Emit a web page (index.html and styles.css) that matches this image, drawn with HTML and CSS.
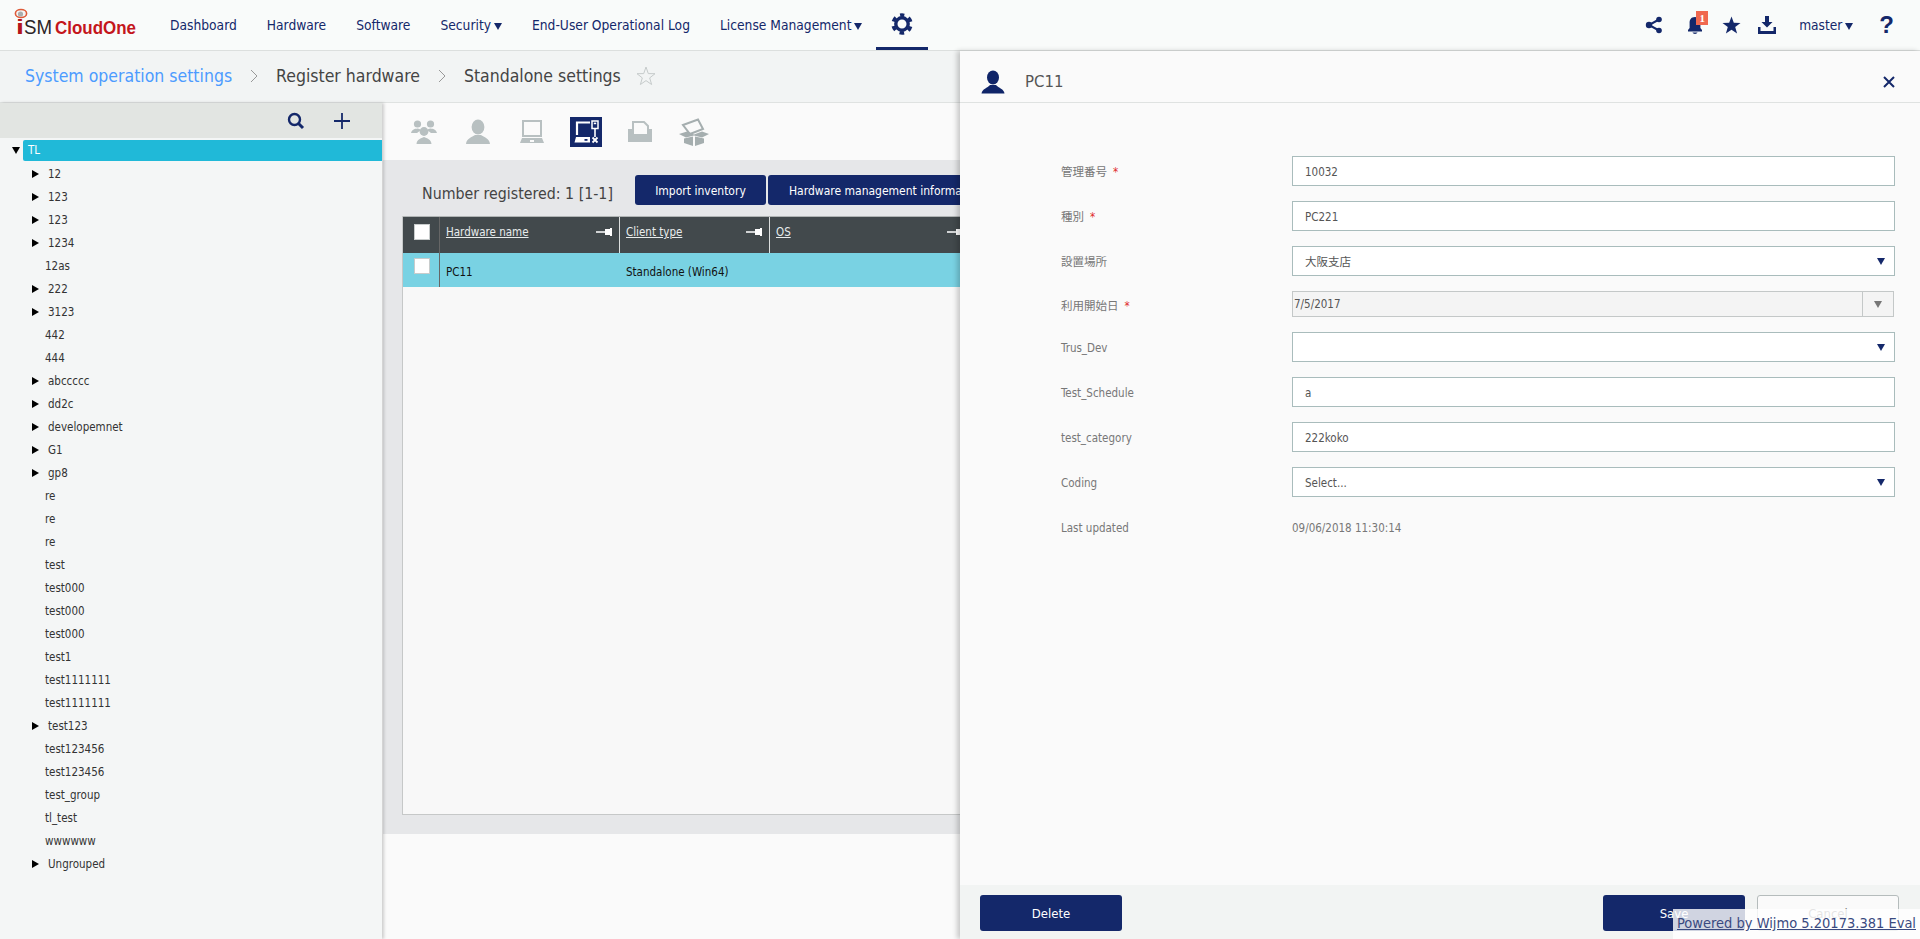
FILE: index.html
```html
<!DOCTYPE html>
<html lang="en">
<head>
    <meta charset="UTF-8">
    <title>ISM CloudOne</title>
    <link rel="stylesheet" href="styles.css">
</head>
<body>
    <!-- Top navigation -->
    <header class="topbar">
        <div class="logo">
            <svg width="140" height="40" viewBox="0 0 140 40">
                <ellipse cx="21" cy="13.5" rx="5.6" ry="4" fill="#f4f5f5" stroke="#de5a38" stroke-width="1.6"/>
                <circle cx="20.5" cy="14" r="2.6" fill="#a9adad"/>
                <text x="16" y="34" class="logo-i" textLength="8" lengthAdjust="spacingAndGlyphs">i</text>
                <text x="24" y="34" class="logo-sm" textLength="28" lengthAdjust="spacingAndGlyphs">SM</text>
                <text x="55" y="34" class="logo-cloud" textLength="81" lengthAdjust="spacingAndGlyphs">CloudOne</text>
            </svg>
        </div>
        <nav class="nav">
            <a>Dashboard</a>
            <a>Hardware</a>
            <a>Software</a>
            <a>Security<span class="nav-caret"></span></a>
            <a>End-User Operational Log</a>
            <a>License Management<span class="nav-caret"></span></a>
            <a class="nav-gear">
                <svg width="24" height="24" viewBox="0 0 24 24">
                    <circle cx="12" cy="12" r="6.2" fill="none" stroke="#14286a" stroke-width="3.4"/>
                    <circle cx="12" cy="12" r="9" fill="none" stroke="#14286a" stroke-width="3.4" stroke-dasharray="4.6 4.82" stroke-dashoffset="2.3" transform="rotate(-90 12 12)"/>
                </svg>
            </a>
        </nav>
        <div class="top-icons">
            <svg class="ti-share" width="18" height="18" viewBox="0 0 18 18">
                <path d="M14 3.5 L4 9 L14 14.5" fill="none" stroke="#14286a" stroke-width="2"/>
                <circle cx="14" cy="3.5" r="2.8" fill="#14286a"/>
                <circle cx="4" cy="9" r="3.2" fill="#14286a"/>
                <circle cx="14" cy="14.5" r="2.8" fill="#14286a"/>
            </svg>
            <div class="ti-bell">
                <svg width="16" height="19" viewBox="0 0 16 19">
                    <path d="M8 1 C3.8 1 2.6 4 2.6 7 L2.6 12 L1 14 L1 15.5 L15 15.5 L15 14 L13.4 12 L13.4 7 C13.4 4 12.2 1 8 1 Z M5.5 16.5 C6 18.4 10 18.4 10.5 16.5 Z" fill="#14286a"/>
                </svg>
                <span class="badge">1</span>
            </div>
            <svg class="ti-star" width="19" height="18" viewBox="0 0 19 18">
                <polygon points="9.5,0.5 11.8,6.7 18.5,6.9 13.2,11 15.1,17.5 9.5,13.7 3.9,17.5 5.8,11 0.5,6.9 7.2,6.7" fill="#14286a"/>
            </svg>
            <svg class="ti-down" width="18" height="18" viewBox="0 0 18 18">
                <path d="M7 0 L11 0 L11 6 L14.5 6 L9 11.5 L3.5 6 L7 6 Z M0 11 L2.5 11 L2.5 15 L15.5 15 L15.5 11 L18 11 L18 18 L0 18 Z" fill="#14286a"/>
            </svg>
            <span class="ti-user">master<span class="nav-caret"></span></span>
            <span class="ti-help">?</span>
        </div>
    </header>

    <!-- Breadcrumb -->
    <div class="crumbs">
        <a class="crumb-link">System operation settings</a>
        <svg class="chev" width="8" height="14" viewBox="0 0 8 14"><path d="M1 1 L7 7 L1 13" fill="none" stroke="#999" stroke-width="1"/></svg>
        <span>Register hardware</span>
        <svg class="chev" width="8" height="14" viewBox="0 0 8 14"><path d="M1 1 L7 7 L1 13" fill="none" stroke="#999" stroke-width="1"/></svg>
        <span>Standalone settings</span>
        <svg class="crumb-star" width="20" height="20" viewBox="0 0 20 20">
            <polygon points="10,1 12.3,7.6 19,7.7 13.7,11.9 15.6,18.5 10,14.6 4.4,18.5 6.3,11.9 1,7.7 7.7,7.6" fill="none" stroke="#c6cbcb" stroke-width="1"/>
        </svg>
    </div>

    <div class="content">
        <!-- Tree on the left -->
        <aside class="side">
            <div class="side-tools">
                <svg width="18" height="18" viewBox="0 0 18 18">
                    <circle cx="7.5" cy="7.5" r="5.5" fill="none" stroke="#14286a" stroke-width="2.4"/>
                    <path d="M11.5 11.5 L16 16" stroke="#14286a" stroke-width="3"/>
                </svg>
                <svg width="16" height="16" viewBox="0 0 16 16">
                    <path d="M8 0 V16 M0 8 H16" stroke="#14286a" stroke-width="1.8"/>
                </svg>
            </div>
            <div class="tree">
                <div class="tree-root"><span class="tri-down"></span><span class="tree-sel">TL</span></div>
                <div class="node"><span class="tri"></span>12</div>
                <div class="node"><span class="tri"></span>123</div>
                <div class="node"><span class="tri"></span>123</div>
                <div class="node"><span class="tri"></span>1234</div>
                <div class="node leaf">12as</div>
                <div class="node"><span class="tri"></span>222</div>
                <div class="node"><span class="tri"></span>3123</div>
                <div class="node leaf">442</div>
                <div class="node leaf">444</div>
                <div class="node"><span class="tri"></span>abccccc</div>
                <div class="node"><span class="tri"></span>dd2c</div>
                <div class="node"><span class="tri"></span>developemnet</div>
                <div class="node"><span class="tri"></span>G1</div>
                <div class="node"><span class="tri"></span>gp8</div>
                <div class="node leaf">re</div>
                <div class="node leaf">re</div>
                <div class="node leaf">re</div>
                <div class="node leaf">test</div>
                <div class="node leaf">test000</div>
                <div class="node leaf">test000</div>
                <div class="node leaf">test000</div>
                <div class="node leaf">test1</div>
                <div class="node leaf">test1111111</div>
                <div class="node leaf">test1111111</div>
                <div class="node"><span class="tri"></span>test123</div>
                <div class="node leaf">test123456</div>
                <div class="node leaf">test123456</div>
                <div class="node leaf">test_group</div>
                <div class="node leaf">tl_test</div>
                <div class="node leaf">wwwwww</div>
                <div class="node"><span class="tri"></span>Ungrouped</div>
            </div>
        </aside>

        <main class="main">
            <!-- Client type tabs -->
            <div class="tabs">
                <div class="tab">
                    <svg width="26" height="26" viewBox="0 0 26 26" fill="#b8c0c1">
                        <circle cx="6.5" cy="5" r="3.6"/><circle cx="19.5" cy="5" r="3.6"/>
                        <path d="M0 14 C1 10 4 10 6.5 9.5 C8 10 9 10 10 11 L6 14 Z M26 14 C25 10 22 10 19.5 9.5 C18 10 17 10 16 11 L20 14 Z"/>
                        <circle cx="13" cy="12.5" r="4.4"/>
                        <path d="M5.5 25 C6 20 10 19.5 13 18 C16 19.5 20 20 20.5 25 Z"/>
                    </svg>
                </div>
                <div class="tab">
                    <svg width="26" height="26" viewBox="0 0 26 26" fill="#b8c0c1">
                        <ellipse cx="13" cy="8" rx="6.4" ry="7.6"/>
                        <path d="M1 25 C1.5 19 7 18.5 10 16 L16 16 C19 18.5 24.5 19 25 25 Z"/>
                    </svg>
                </div>
                <div class="tab">
                    <svg width="26" height="24" viewBox="0 0 26 24">
                        <rect x="4" y="1" width="18" height="15" fill="none" stroke="#b8c0c1" stroke-width="2"/>
                        <path d="M3 18 H23 L25 23 H1 Z" fill="#b8c0c1"/>
                        <rect x="11" y="20" width="4" height="2" fill="#fafafa"/>
                    </svg>
                </div>
                <div class="tab">
                    <svg class="tab-active" width="32" height="30" viewBox="0 0 32 30">
                        <rect width="32" height="30" fill="#14286a"/>
                        <path d="M20 5.5 H7 V18" fill="none" stroke="#fff" stroke-width="2.2"/>
                        <rect x="22" y="4" width="6" height="7.5" fill="none" stroke="#fff" stroke-width="1.5"/>
                        <rect x="23.8" y="5.6" width="2.4" height="1.6" fill="#fff"/>
                        <path d="M25 11 V20" stroke="#fff" stroke-width="1.6"/>
                        <path d="M6 20 H20 V25.5 H4.5 Z" fill="#fff"/>
                        <rect x="14.5" y="22" width="3" height="1.8" fill="#14286a"/>
                        <path d="M22.5 20.5 L27.5 25.5 M27.5 20.5 L22.5 25.5" stroke="#fff" stroke-width="1.8"/>
                    </svg>
                </div>
                <div class="tab">
                    <svg width="26" height="22" viewBox="0 0 26 22">
                        <path d="M6 1 H17 L21 5 V14 H6 Z" fill="#fafafa" stroke="#b8c0c1" stroke-width="2"/>
                        <path d="M1 8 H5 V15 H22 V8 H25 V21 H1 Z" fill="#b8c0c1"/>
                    </svg>
                </div>
                <div class="tab">
                    <svg width="32" height="28" viewBox="0 0 32 28" fill="#a5aeaf">
                        <path d="M5 7 L20 1.5 L25 11 L12 16 Z" fill="none" stroke="#a5aeaf" stroke-width="2"/>
                        <path d="M1 16 L9 13.5 L16 16.5 L24 13.5 L31 16 L24 19.5 L16 17.5 L8 19.5 Z"/>
                        <path d="M6 20.5 L15 18.5 V28 L6 25 Z M26 20.5 L17 18.5 V28 L26 25 Z"/>
                    </svg>
                </div>
            </div>

            <section class="panel">
                <div class="panel-top">
                    <span class="count">Number registered: 1 [1-1]</span>
                    <button class="btn-top btn-import">Import inventory</button>
                    <button class="btn-top btn-info">Hardware management information</button>
                </div>
                <div class="grid">
                    <div class="grid-head">
                        <div class="cell cell-check"><span class="check"></span></div>
                        <div class="cell cell-name"><u>Hardware name</u>
                            <svg class="pin" width="16" height="8" viewBox="0 0 16 8"><path d="M0 3.2 H9 V1 H14 V0 H16 V8 H14 V7 H9 V4.8 H0 Z" fill="#fff"/></svg>
                        </div>
                        <div class="cell cell-client"><u>Client type</u>
                            <svg class="pin" width="16" height="8" viewBox="0 0 16 8"><path d="M0 3.2 H9 V1 H14 V0 H16 V8 H14 V7 H9 V4.8 H0 Z" fill="#fff"/></svg>
                        </div>
                        <div class="cell cell-os"><u>OS</u>
                            <svg class="pin pin-os" width="16" height="8" viewBox="0 0 16 8"><path d="M0 3.2 H9 V1 H14 V0 H16 V8 H14 V7 H9 V4.8 H0 Z" fill="#fff"/></svg>
                        </div>
                    </div>
                    <div class="grid-row">
                        <div class="cell cell-check"><span class="check"></span></div>
                        <div class="cell cell-name">PC11</div>
                        <div class="cell cell-client">Standalone (Win64)</div>
                        <div class="cell cell-os"></div>
                    </div>
                </div>
            </section>
        </main>
    </div>

    <!-- Drawer over the page -->
    <div class="drawer">
        <div class="drawer-head">
            <svg width="24" height="24" viewBox="0 0 24 24" fill="#0f2468">
                <ellipse cx="12" cy="7.5" rx="6" ry="7"/>
                <path d="M0.5 23.5 C1 19 6.5 18 9 15 L15 15 C17.5 18 23 19 23.5 23.5 Z"/>
            </svg>
            <span class="drawer-title">PC11</span>
            <svg class="drawer-close" width="12" height="12" viewBox="0 0 12 12">
                <path d="M1 1 L11 11 M11 1 L1 11" stroke="#14286a" stroke-width="2"/>
            </svg>
        </div>
        <div class="form">
            <div class="row">
                <label class="lbl">管理番号<i class="req">*</i></label>
                <div class="field">10032</div>
            </div>
            <div class="row">
                <label class="lbl">種別<i class="req">*</i></label>
                <div class="field">PC221</div>
            </div>
            <div class="row">
                <label class="lbl">設置場所</label>
                <div class="field field-select">大阪支店<span class="sel-arrow"></span></div>
            </div>
            <div class="row row-date">
                <label class="lbl">利用開始日<i class="req">*</i></label>
                <div class="field-date"><span class="date-text">7/5/2017</span><span class="date-btn"><span class="sel-arrow sel-arrow-grey"></span></span></div>
            </div>
            <div class="row">
                <label class="lbl">Trus_Dev</label>
                <div class="field field-select"><span class="sel-arrow"></span></div>
            </div>
            <div class="row">
                <label class="lbl">Test_Schedule</label>
                <div class="field">a</div>
            </div>
            <div class="row">
                <label class="lbl">test_category</label>
                <div class="field">222koko</div>
            </div>
            <div class="row">
                <label class="lbl">Coding</label>
                <div class="field field-select">Select...<span class="sel-arrow"></span></div>
            </div>
            <div class="row">
                <label class="lbl">Last updated</label>
                <div class="value">09/06/2018 11:30:14</div>
            </div>
        </div>
        <div class="drawer-foot">
            <button class="btn btn-navy">Delete</button>
            <button class="btn btn-navy btn-save">Save</button>
            <button class="btn btn-cancel">Cancel</button>
        </div>
    </div>

    <a class="wijmo">Powered by Wijmo 5.20173.381 Eval</a>
</body>
</html>
```

FILE: styles.css
```css
/* Page */
html, body {
    height: 100%;
}

body {
    margin: 0;
    height: 939px;
    overflow: hidden;
    position: relative;
    background-color: #fafafa;
    color: #333;
    font-family: "DejaVu Sans Condensed", "DejaVu Sans", "Noto Sans CJK JP", sans-serif;
    font-size: 11.5px;
}

/* Top bar */
.topbar {
    display: flex;
    align-items: center;
    height: 50px;
    background-color: #f9fbfa;
    border-bottom: 1px solid #dcdfde;
}

.logo {
    width: 170px;
    height: 50px;
    flex: none;
}

.logo svg {
    display: block;
}

.logo-i, .logo-sm, .logo-cloud {
    font-family: "Liberation Sans", sans-serif;
    font-size: 21px;
}

.logo-i {
    fill: #b3151c;
    font-weight: bold;
}

.logo-sm {
    fill: #2b2326;
}

.logo-cloud {
    fill: #c4161c;
    font-weight: bold;
    font-size: 18px;
}

.nav {
    display: flex;
    align-items: center;
    gap: 30px;
    height: 50px;
    font-size: 13.7px;
    color: #14286a;
}

.nav-caret {
    display: inline-block;
    width: 0;
    height: 0;
    margin-left: 3px;
    border-left: 4px solid transparent;
    border-right: 4px solid transparent;
    border-top: 7px solid #14286a;
    vertical-align: 0;
}

.nav-gear {
    display: flex;
    align-items: center;
    justify-content: center;
    width: 52px;
    height: 47px;
    margin-left: -16px;
    border-bottom: 3px solid #14286a;
}

.top-icons {
    display: flex;
    align-items: center;
    margin-left: auto;
    height: 50px;
    padding-right: 26px;
    color: #14286a;
}

.ti-share {
    margin-right: 24px;
}

.ti-bell {
    position: relative;
    display: flex;
    margin-right: 19px;
}

.badge {
    position: absolute;
    top: -5px;
    left: 9px;
    width: 12px;
    height: 14px;
    background-color: #f0684f;
    color: #fff;
    font: bold 11px/14px "Liberation Serif", serif;
    text-align: center;
}

.ti-star {
    margin-right: 17px;
}

.ti-down {
    margin-right: 23px;
}

.ti-user {
    font-size: 13.6px;
    margin-right: 26px;
}

.ti-help {
    font: bold 24px/24px "Liberation Sans", sans-serif;
}

/* Breadcrumb */
.crumbs {
    display: flex;
    align-items: center;
    height: 49px;
    padding: 0 0 2px 25px;
    background-color: #f2f4f4;
    border-bottom: 1px solid #dfe2e1;
    font-size: 17.5px;
    color: #444;
}

.crumb-link {
    color: #4c9bff;
}

.chev {
    margin: 0 18px 0 18px;
}

.crumb-star {
    margin-left: 15px;
}

/* Content below the breadcrumb */
.content {
    display: flex;
    height: 836px;
}

.side {
    width: 382px;
    flex: none;
    background-color: #f4f6f6;
    box-shadow: 2px 0 3px rgba(0, 0, 0, 0.18);
    position: relative;
}

.side-tools {
    display: flex;
    align-items: center;
    justify-content: flex-end;
    gap: 29px;
    height: 35px;
    padding-right: 32px;
    background-color: #e2e5e2;
}

.tree {
    padding-top: 2px;
}

.tree-root {
    display: flex;
    align-items: center;
    height: 21px;
    padding-left: 12px;
    margin-bottom: 1px;
}

.tri-down {
    width: 0;
    height: 0;
    margin-right: 3px;
    border-left: 4px solid transparent;
    border-right: 4px solid transparent;
    border-top: 7px solid #000;
}

.tree-sel {
    flex: 1;
    height: 21px;
    line-height: 20px;
    padding-left: 5px;
    background-color: #20b9d8;
    border-radius: 2px 0 0 2px;
    color: #fff;
}

.node {
    display: flex;
    align-items: center;
    height: 23px;
    padding-left: 32px;
}

.node.leaf {
    padding-left: 45px;
}

.tri {
    width: 0;
    height: 0;
    margin-right: 9px;
    border-top: 4px solid transparent;
    border-bottom: 4px solid transparent;
    border-left: 7px solid #000;
}

/* Main column */
.main {
    flex: 1;
    margin-left: 1px;
    min-width: 0;
    overflow: hidden;
}

.tabs {
    display: flex;
    align-items: center;
    height: 57px;
    padding-left: 14px;
    background-color: #fafafa;
}

.tab {
    display: flex;
    align-items: center;
    justify-content: center;
    width: 54px;
}

.panel {
    height: 674px;
    padding: 15px 20px 0 19px;
    box-sizing: border-box;
    background-color: #e6e7e9;
}

.panel-top {
    display: flex;
    height: 30px;
}

.count {
    width: 233px;
    padding-left: 20px;
    box-sizing: border-box;
    font-size: 15.8px;
    line-height: 38px;
    color: #444;
    white-space: nowrap;
}

.btn-top {
    height: 30px;
    padding: 1px 0 0;
    border: none;
    border-radius: 3px;
    background-color: #14286a;
    color: #fff;
    font: 12px "DejaVu Sans Condensed", "DejaVu Sans", sans-serif;
}

.btn-import {
    width: 131px;
    margin-right: 2px;
}

.btn-info {
    width: 240px;
    padding-left: 21px;
    text-align: left;
    white-space: nowrap;
    overflow: hidden;
}

.grid {
    height: 599px;
    margin-top: 11px;
    box-sizing: border-box;
    background-color: #f8f8f8;
    border: 1px solid #c6c8c8;
    border-top-width: 0;
}

.grid-head, .grid-row {
    display: flex;
}

.grid-head {
    height: 37px;
    background-color: #42494c;
    color: #e8ecec;
    border-top: 1px solid #b0b4b4;
    box-sizing: border-box;
}

.grid-head .cell {
    padding-bottom: 6px;
}

.grid-row {
    height: 34px;
    background-color: #79d2e3;
    color: #111;
}

.grid-row .cell {
    padding-top: 3px;
}

.cell {
    position: relative;
    box-sizing: border-box;
    padding: 0 6px;
    display: flex;
    align-items: center;
}

.cell-check {
    width: 37px;
    padding: 0 0 0 11px;
    border-right: 1px solid #666;
}

.grid-row .cell-check {
    align-items: flex-start;
    padding-top: 5px;
}

.cell-name {
    width: 180px;
}

.grid-head .cell-name, .grid-head .cell-client {
    border-right: 1px solid #dcdfdf;
}

.cell-client {
    width: 150px;
}

.cell-os {
    flex: 1;
}

.check {
    width: 14px;
    height: 14px;
    background-color: #fff;
    border: 1px solid #c8cccc;
    display: block;
}

/* Little pin in the header cells */
.pin {
    position: absolute;
    right: 7px;
    top: 11px;
}

.pin-os {
    left: 177px;
    right: auto;
}

/* Drawer */
.drawer {
    position: absolute;
    top: 51px;
    left: 960px;
    right: 0;
    bottom: 0;
    display: flex;
    flex-direction: column;
    background-color: #fafafa;
    box-shadow: -3px 0 5px rgba(0, 0, 0, 0.2);
}

.drawer-head {
    display: flex;
    align-items: center;
    padding: 10px 25px 0 21px;
    box-sizing: border-box;
    flex: none;
    height: 52px;
    border-bottom: 1px solid #dfe2e1;
}

.drawer-title {
    margin-left: 20px;
    font-size: 16.6px;
    color: #555;
}

.drawer-close {
    margin-left: auto;
}

.form {
    flex: 1;
    padding: 53px 25px 0 101px;
}

.row {
    display: flex;
    align-items: flex-start;
    height: 45px;
    color: #777;
}

.row-date {
    height: 41px;
}

.lbl {
    width: 231px;
    flex: none;
    line-height: 32px;
}

.row-date .lbl {
    line-height: 30px;
}

.req {
    margin-left: 6px;
    color: #e02a2a;
    font-style: normal;
}

.field, .field-date {
    flex: 1;
    position: relative;
    box-sizing: border-box;
    background-color: #fff;
    color: #555;
}

.field {
    height: 30px;
    line-height: 30px;
    padding-left: 12px;
    border: 1px solid #a9bcbc;
}

.field-date {
    display: flex;
    height: 26px;
    line-height: 24px;
    margin-right: 1px;
    border: 1px solid #c4c8c8;
    background-color: #f4f4f4;
}

.date-text {
    flex: 1;
    padding-left: 1px;
}

.date-btn {
    position: relative;
    width: 30px;
    border-left: 1px solid #c4c8c8;
}

.sel-arrow {
    position: absolute;
    right: 9px;
    top: 11px;
    width: 0;
    height: 0;
    border-left: 4px solid transparent;
    border-right: 4px solid transparent;
    border-top: 7px solid #14286a;
}

.sel-arrow-grey {
    right: 11px;
    top: 9px;
    border-top-color: #777;
}

.value {
    line-height: 32px;
}

.drawer-foot {
    display: flex;
    align-items: flex-start;
    height: 54px;
    padding: 10px 21px 0 20px;
    box-sizing: border-box;
    background-color: #f2f4f3;
}

.btn {
    width: 142px;
    height: 36px;
    border-radius: 3px;
    font: 13px "DejaVu Sans Condensed", "DejaVu Sans", sans-serif;
}

.btn-navy {
    border: none;
    background-color: #14286a;
    color: #fff;
}

.btn-save {
    margin-left: auto;
    margin-right: 12px;
}

.btn-cancel {
    background-color: #fafafa;
    border: 1px solid #b5bcbc;
    color: #777;
}

/* Evaluation banner in the corner */
.wijmo {
    position: absolute;
    right: 0;
    bottom: 0;
    height: 30px;
    padding: 0 4px;
    background-color: rgba(255, 255, 255, 0.8);
    color: #3a4a80;
    font-size: 14.5px;
    line-height: 29px;
    text-decoration: underline;
    white-space: nowrap;
}
```
